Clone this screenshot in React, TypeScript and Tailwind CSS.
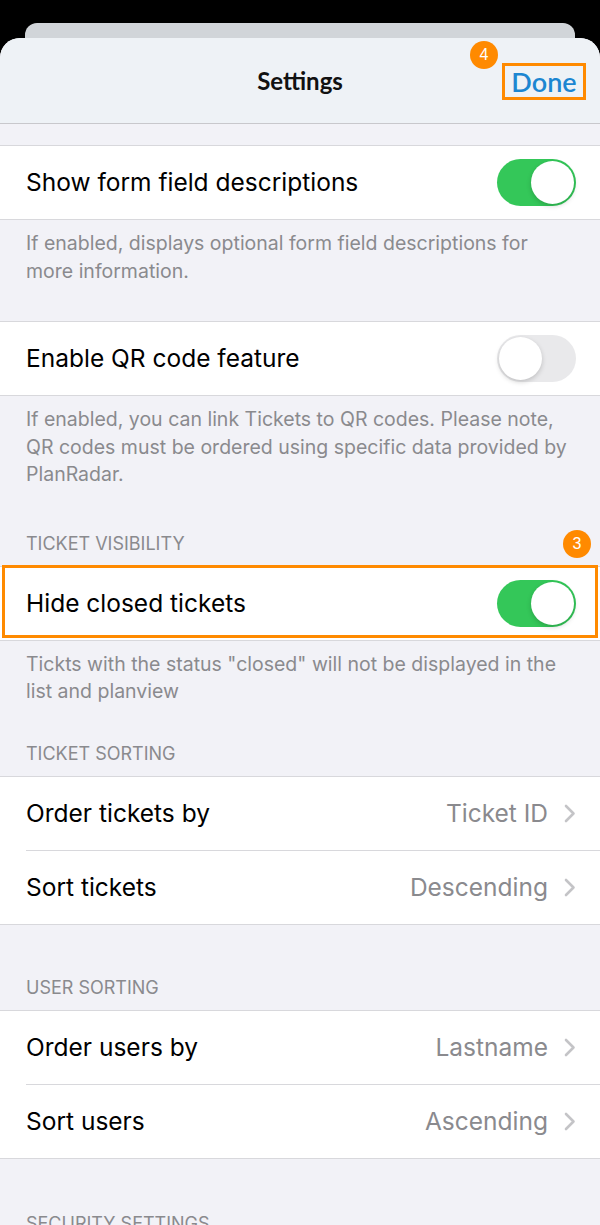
const sf = "font-['Inter','Roboto',sans-serif]";

function Toggle({ on }: { on: boolean }) {
  return (
    <div
      className={`w-[79px] h-[47px] rounded-full p-[2px] flex items-center ${
        on ? 'bg-[#34c759] justify-end' : 'bg-[#e9e9eb] justify-start'
      }`}
    >
      <div className="w-[43px] h-[43px] rounded-full bg-white shadow-[0_2px_5px_rgba(0,0,0,0.18)]" />
    </div>
  );
}

function ToggleRow({ label, on }: { label: string; on: boolean }) {
  return (
    <div className="h-[73px] bg-white flex items-center justify-between pl-[26px] pr-[24px]">
      <span className="text-[24.5px] text-black">{label}</span>
      <Toggle on={on} />
    </div>
  );
}

function Chevron() {
  return (
    <svg width="12" height="19" viewBox="0 0 12 19" fill="none" className="text-[#c4c4c7]">
      <path d="M2 2 L9.5 9.5 L2 17" stroke="currentColor" strokeWidth="2.6" strokeLinecap="round" strokeLinejoin="round" />
    </svg>
  );
}

function LinkRow({ label, value }: { label: string; value: string }) {
  return (
    <div className="h-[73px] flex items-center justify-between pr-[24px]">
      <span className="text-[24.5px] text-black">{label}</span>
      <div className="flex items-center gap-[16px]">
        <span className="text-[24.5px] text-[#8a8a8e]">{value}</span>
        <Chevron />
      </div>
    </div>
  );
}

function Footer({ children, pb }: { children: React.ReactNode; pb: string }) {
  return (
    <p className={`px-[26px] pt-[10px] text-[19.5px] leading-[27.5px] text-[#8a8a8e] ${pb}`}>
      {children}
    </p>
  );
}

function Header({ label, pt, pb = 'pb-[11px]' }: { label: string; pt: string; pb?: string }) {
  return (
    <div className={`px-[26px] text-[18px] leading-[22px] text-[#8a8a8e] uppercase ${pt} ${pb}`}>
      {label}
    </div>
  );
}

function Badge({ n, className }: { n: string; className: string }) {
  return (
    <div
      className={`absolute w-[28px] h-[28px] rounded-full bg-[#ff8a00] text-white flex items-center justify-center text-[16px] font-['Liberation_Sans',sans-serif] ${className}`}
    >
      {n}
    </div>
  );
}

export default function App() {
  return (
    <div className={`w-[600px] h-[1225px] overflow-hidden bg-black pt-[23px] ${sf}`}>
      <div className="mx-[25px] h-[15px] rounded-t-[12px] bg-[#d1d5d9]" />
      <div className="rounded-t-[20px] overflow-hidden bg-[#f2f2f7]">
        {/* nav bar */}
        <div className="relative h-[86px] bg-[#eef2f6] border-b border-[#c8c8cc] flex items-center justify-center">
          <span className="font-['Lato',sans-serif] font-bold text-[24px] text-[#111]">Settings</span>
          <div className="absolute right-[14px] top-[25px] w-[84px] h-[37px] border-[3px] border-[#ff8a00] flex items-center justify-center">
            <span className="font-['Lato',sans-serif] font-semibold text-[27px] text-[#1c86d1] leading-none">
              Done
            </span>
          </div>
          <Badge n="4" className="left-[470px] top-[3px]" />
        </div>

        <div className="h-[21px]" />
        <div className="border-y border-[#d8d8dc]">
          <ToggleRow label="Show form field descriptions" on />
        </div>
        <Footer pb="pb-[36px]">
          If enabled, displays optional form field descriptions for more information.
        </Footer>

        <div className="border-y border-[#d8d8dc]">
          <ToggleRow label="Enable QR code feature" on={false} />
        </div>
        <Footer pb="pb-0">
          If enabled, you can link Tickets to QR codes. Please note, QR codes must be ordered using
          specific data provided by PlanRadar.
        </Footer>

        <div className="relative">
          <Header label="Ticket visibility" pt="pt-[44px]" pb="pb-[11px]" />
          <Badge n="3" className="right-[9px] top-[41px]" />
        </div>
        <div className="relative border-y border-[#d8d8dc]">
          <ToggleRow label="Hide closed tickets" on />
          <div className="absolute left-[2px] right-[2px] top-[-2px] h-[73px] border-[3px] border-[#ff8a00]" />
        </div>
        <Footer pb="pb-0">
          Tickts with the status "closed" will not be displayed in the list and planview
        </Footer>

        <Header label="Ticket sorting" pt="pt-[37px]" />
        <div className="bg-white border-y border-[#d8d8dc] pl-[26px]">
          <div className="border-b border-[#d8d8dc]">
            <LinkRow label="Order tickets by" value="Ticket ID" />
          </div>
          <LinkRow label="Sort tickets" value="Descending" />
        </div>

        <Header label="User sorting" pt="pt-[52px]" />
        <div className="bg-white border-y border-[#d8d8dc] pl-[26px]">
          <div className="border-b border-[#d8d8dc]">
            <LinkRow label="Order users by" value="Lastname" />
          </div>
          <LinkRow label="Sort users" value="Ascending" />
        </div>

        <Header label="Security settings" pt="pt-[54px]" />
        <div className="h-[200px]" />
      </div>
    </div>
  );
}
